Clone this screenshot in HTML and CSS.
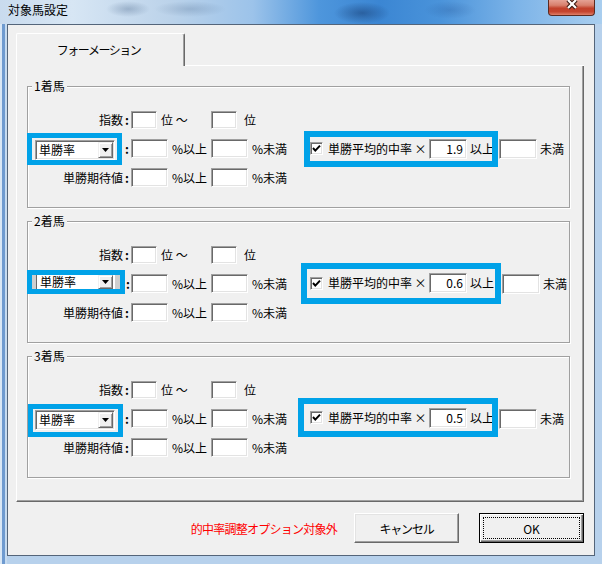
FILE: index.html
```html
<!DOCTYPE html>
<html lang="ja">
<head>
    <meta charset="UTF-8">
    <title>対象馬設定</title>
    <link rel="stylesheet" href="styles.css">
</head>
<body>
    <div class="window">
        <div class="titlebar">
            <span class="title">対象馬設定</span>
            <span class="close">
                <svg width="14" height="11" viewBox="0 0 14 11">
                    <path d="M3 1 L11 9 M11 1 L3 9" stroke="#3b1810" stroke-width="4.4" fill="none"/>
                    <path d="M3 1 L11 9 M11 1 L3 9" stroke="#fff" stroke-width="2.2" fill="none"/>
                </svg>
            </span>
        </div>

        <div class="client">
            <div class="tab-strip">
                <div class="tab">フォーメーション</div>
                <div class="tab-rest"></div>
            </div>

            <div class="tab-panel">
                <!-- 1着馬 -->
                <div class="group">
                    <div class="group-title">1着馬</div>
                    <div class="row">
                        <div class="lead"><span>指数</span><span class="colon">:</span></div>
                        <span class="edit edit-s"></span>
                        <span class="unit unit-range">位 ～</span>
                        <span class="edit edit-s"></span>
                        <span class="unit unit-rank">位</span>
                    </div>
                    <div class="row">
                        <div class="lead">
                            <div class="mark pick-1">
                                <div class="combo"><span>単勝率</span><span class="combo-btn"><svg width="7" height="4" viewBox="0 0 7 4"><path d="M0 0 H7 L3.5 4 Z" fill="#000"/></svg></span></div>
                            </div>
                            <span class="colon">:</span>
                        </div>
                        <span class="edit"></span>
                        <span class="unit unit-mid">%以上</span>
                        <span class="edit"></span>
                        <span class="unit unit-end">%未満</span>
                        <div class="mark tick-1">
                            <span class="checkbox"><svg width="11" height="11" viewBox="0 0 11 11"><path d="M2 5 L4.3 7.6 L9 2.6" stroke="#000" stroke-width="2" fill="none"/></svg></span>
                            <span class="check-label">単勝平均的中率</span>
                            <span class="times">×</span>
                            <span class="edit edit-num">1.9</span>
                            <span class="above">以上</span>
                        </div>
                        <span class="edit edit-num"></span>
                        <span class="unit unit-below">未満</span>
                    </div>
                    <div class="row">
                        <div class="lead"><span>単勝期待値</span><span class="colon">:</span></div>
                        <span class="edit"></span>
                        <span class="unit unit-mid">%以上</span>
                        <span class="edit"></span>
                        <span class="unit unit-end">%未満</span>
                    </div>
                </div>

                <!-- 2着馬 -->
                <div class="group">
                    <div class="group-title">2着馬</div>
                    <div class="row">
                        <div class="lead"><span>指数</span><span class="colon">:</span></div>
                        <span class="edit edit-s"></span>
                        <span class="unit unit-range">位 ～</span>
                        <span class="edit edit-s"></span>
                        <span class="unit unit-rank">位</span>
                    </div>
                    <div class="row">
                        <div class="lead">
                            <div class="mark pick-2">
                                <div class="combo combo-flat"><span>単勝率</span><span class="combo-btn"><svg width="7" height="4" viewBox="0 0 7 4"><path d="M0 0 H7 L3.5 4 Z" fill="#000"/></svg></span></div>
                            </div>
                            <span class="colon">:</span>
                        </div>
                        <span class="edit"></span>
                        <span class="unit unit-mid">%以上</span>
                        <span class="edit"></span>
                        <span class="unit unit-end">%未満</span>
                        <div class="mark tick-2">
                            <span class="checkbox"><svg width="11" height="11" viewBox="0 0 11 11"><path d="M2 5 L4.3 7.6 L9 2.6" stroke="#000" stroke-width="2" fill="none"/></svg></span>
                            <span class="check-label">単勝平均的中率</span>
                            <span class="times">×</span>
                            <span class="edit edit-num">0.6</span>
                            <span class="above">以上</span>
                        </div>
                        <span class="edit edit-num"></span>
                        <span class="unit unit-below">未満</span>
                    </div>
                    <div class="row">
                        <div class="lead"><span>単勝期待値</span><span class="colon">:</span></div>
                        <span class="edit"></span>
                        <span class="unit unit-mid">%以上</span>
                        <span class="edit"></span>
                        <span class="unit unit-end">%未満</span>
                    </div>
                </div>

                <!-- 3着馬 -->
                <div class="group">
                    <div class="group-title">3着馬</div>
                    <div class="row">
                        <div class="lead"><span>指数</span><span class="colon">:</span></div>
                        <span class="edit edit-s"></span>
                        <span class="unit unit-range">位 ～</span>
                        <span class="edit edit-s"></span>
                        <span class="unit unit-rank">位</span>
                    </div>
                    <div class="row">
                        <div class="lead">
                            <div class="mark pick-3">
                                <div class="combo"><span>単勝率</span><span class="combo-btn"><svg width="7" height="4" viewBox="0 0 7 4"><path d="M0 0 H7 L3.5 4 Z" fill="#000"/></svg></span></div>
                            </div>
                            <span class="colon">:</span>
                        </div>
                        <span class="edit"></span>
                        <span class="unit unit-mid">%以上</span>
                        <span class="edit"></span>
                        <span class="unit unit-end">%未満</span>
                        <div class="mark tick-3">
                            <span class="checkbox"><svg width="11" height="11" viewBox="0 0 11 11"><path d="M2 5 L4.3 7.6 L9 2.6" stroke="#000" stroke-width="2" fill="none"/></svg></span>
                            <span class="check-label">単勝平均的中率</span>
                            <span class="times">×</span>
                            <span class="edit edit-num">0.5</span>
                            <span class="above">以上</span>
                        </div>
                        <span class="edit edit-num"></span>
                        <span class="unit unit-below">未満</span>
                    </div>
                    <div class="row">
                        <div class="lead"><span>単勝期待値</span><span class="colon">:</span></div>
                        <span class="edit"></span>
                        <span class="unit unit-mid">%以上</span>
                        <span class="edit"></span>
                        <span class="unit unit-end">%未満</span>
                    </div>
                </div>
            </div>

            <div class="actions">
                <span class="notice">的中率調整オプション対象外</span>
                <span class="btn">キャンセル</span>
                <span class="btn btn-default">OK</span>
            </div>
        </div>
    </div>
</body>
</html>
```

FILE: styles.css
```css
* {
    box-sizing: border-box;
}

html, body {
    margin: 0;
}

body {
    width: 602px;
    height: 564px;
    overflow: hidden;
    font-family: "Noto Sans CJK JP", "Liberation Sans", sans-serif;
    font-size: 12px;
    color: #000;
    background: #b7d1ec;
}

.window {
    width: 602px;
    height: 564px;
    display: flex;
    flex-direction: column;
    /* marco Aero: franja izquierda */
    background:
        linear-gradient(90deg, #d9e7f5 0, #d9e7f5 2px, #6f9bd0 2px, #6f9bd0 5px, #c6dbf0 5px, #c6dbf0 7px, transparent 7px),
        #b7d1ec;
}

.titlebar {
    height: 24px;
    flex-shrink: 0;
    display: flex;
    align-items: flex-start;
    background:
        radial-gradient(ellipse 22px 8px at 128px 9px, rgba(40, 70, 110, 0.28), transparent),
        radial-gradient(ellipse 36px 8px at 190px 9px, rgba(40, 70, 110, 0.2), transparent),
        radial-gradient(ellipse 28px 11px at 362px 13px, rgba(15, 45, 95, 0.45), transparent),
        radial-gradient(ellipse 26px 9px at 450px 10px, rgba(25, 65, 130, 0.22), transparent),
        linear-gradient(90deg, #c9dbee 0%, #d7e6f4 12%, #bcd3ea 28%, #9cc3ea 42%, #4e96dc 53%, #3b86d3 63%, #4a93da 73%, #7db4e8 86%, #a9ceef 100%);
}

.title {
    padding: 1px 0 0 8px;
    line-height: 18px;
    font-size: 12px;
}

.close {
    margin-left: auto;
    margin-right: 7px;
    width: 47px;
    height: 16px;
    border: 1px solid #5c2a20;
    border-top: none;
    border-radius: 0 0 4px 4px;
    background: linear-gradient(#e5a294 0%, #d8806d 35%, #c2412b 55%, #c5452f 78%, #df8069 100%);
    display: flex;
    justify-content: center;
    align-items: flex-start;
}

.close svg {
    margin-top: -1px;
}

.client {
    margin: 0 7px;
    height: 532px;
    flex-shrink: 0;
    border: 1px solid #54657a;
    background: #f0f0f0;
    padding: 8px 10px 0 8px;
}

/* pestañas */
.tab-strip {
    display: flex;
    height: 33px;
}

.tab {
    width: 169px;
    height: 33px;
    border-top: 1px solid #fff;
    border-left: 1px solid #fff;
    border-right: 1px solid #696969;
    box-shadow: inset -1px 0 0 #a0a0a0;
    border-radius: 2px 2px 0 0;
    display: flex;
    align-items: center;
    justify-content: center;
    padding: 0 4px 2px 0;
    letter-spacing: -1.5px;
}

.tab-rest {
    flex: 1;
    border-bottom: 1px solid #fff;
}

.tab-panel {
    height: 436px;
    border-left: 1px solid #fff;
    border-right: 1px solid #696969;
    border-bottom: 1px solid #696969;
    box-shadow: inset -1px -1px 0 #a0a0a0;
    padding: 20px 13px 0 10px;
}

/* grupos */
.group {
    height: 122px;
    border: 1px solid #a0a0a0;
    box-shadow: 1px 1px 0 #fff, inset 1px 1px 0 #fff;
    margin-bottom: 13px;
}

.group-title {
    width: fit-content;
    margin: -8px 0 12px 4px;
    padding: 0 2px;
    line-height: 14px;
    background: #f0f0f0;
}

.row {
    display: flex;
    align-items: center;
    height: 29px;
    white-space: nowrap;
    line-height: 14px;
}

.row > * {
    flex-shrink: 0;
}

.lead {
    width: 104px;
    margin-left: -1px;
    display: flex;
    align-items: center;
    justify-content: flex-end;
}

.colon {
    width: 8px;
    text-align: center;
    font-weight: bold;
}

.unit-range {
    width: 54px;
    padding-left: 4px;
}

.unit-rank {
    margin-left: 7px;
}

.unit-mid {
    width: 43px;
    padding-left: 4px;
}

.unit-end {
    width: 50px;
    padding-left: 4px;
}

.unit-below {
    margin-left: 3px;
}

/* controles */
.edit {
    display: block;
    width: 37px;
    height: 19px;
    background: #fff;
    border: 1px solid;
    border-color: #a0a0a0 #fff #fff #a0a0a0;
    box-shadow: inset 1px 1px 0 #696969, inset -1px -1px 0 #e3e3e3;
}

.edit-s {
    width: 26px;
    height: 18px;
}

.edit-num {
    width: 38px;
    height: 20px;
    margin-left: 1px;
    text-align: right;
    padding-right: 3px;
    line-height: 17px;
}

.mark .edit-num {
    margin-left: 0;
}

.combo {
    width: 80px;
    height: 20px;
    background: #fff;
    border: 1px solid;
    border-color: #a0a0a0 #fff #fff #a0a0a0;
    box-shadow: inset 1px 1px 0 #696969, inset -1px -1px 0 #e3e3e3;
    display: flex;
    align-items: center;
    padding: 1px 1px 1px 3px;
}

.combo-btn {
    margin-left: auto;
    width: 15px;
    height: 16px;
    background: #f0f0f0;
    border: 1px solid;
    border-color: #f0f0f0 #696969 #696969 #f0f0f0;
    box-shadow: inset 1px 1px 0 #fff, inset -1px -1px 0 #a0a0a0;
    display: flex;
    align-items: center;
    justify-content: center;
}

.combo-flat {
    width: 79px;
    height: 14px;
    border-top: 0;
    border-bottom: 0;
    border-left-color: #696969;
    box-shadow: none;
    padding: 0 1px 0 3px;
}

.combo-flat .combo-btn {
    height: 14px;
}

.checkbox {
    width: 13px;
    height: 13px;
    background: #fff;
    border: 1px solid;
    border-color: #a0a0a0 #fff #fff #a0a0a0;
    box-shadow: inset 1px 1px 0 #696969, inset -1px -1px 0 #e3e3e3;
    display: flex;
    align-items: center;
    justify-content: center;
}

.check-label {
    margin-left: 5px;
    width: 84px;
}

.times {
    width: 17px;
    text-align: center;
}

.above {
    width: 22px;
    margin-left: 3px;
}

/* recuadros azules de la captura */
.mark {
    display: flex;
    align-items: center;
    border: 5px solid #00a2e8;
}

.mark > * {
    flex-shrink: 0;
}

.pick-1 {
    width: 95px;
    height: 32px;
    align-items: flex-start;
    padding: 2px 2px 0 3px;
    margin-right: auto;
}

.pick-2 {
    width: 98px;
    height: 24px;
    padding: 0 5px 0 4px;
    background: #cfcfcf;
    margin-right: auto;
    margin-bottom: 3px;
}

.pick-3 {
    width: 95px;
    height: 33px;
    align-items: flex-start;
    padding: 1px 3px 0 2px;
    margin: 4px auto 0 1px;
}

.tick-1,
.tick-2,
.tick-3 {
    border-width: 6px;
    overflow: hidden;
}

.tick-1 {
    width: 194px;
    height: 36px;
    margin-left: 6px;
}

.tick-2 {
    width: 200px;
    height: 41px;
    margin-left: 3px;
    margin-bottom: 1px;
    padding-left: 3px;
}

.tick-3 {
    width: 200px;
    height: 39px;
    padding-left: 6px;
    margin-bottom: 2px;
}

/* botones */
.actions {
    display: flex;
    justify-content: flex-end;
    align-items: center;
    height: 30px;
    margin-top: 11px;
}

.notice {
    color: #f00;
    letter-spacing: -0.75px;
    margin-right: 17px;
}

.btn {
    width: 105px;
    height: 30px;
    display: flex;
    align-items: center;
    justify-content: center;
    background: #f0f0f0;
    border: 1px solid;
    border-color: #fff #696969 #696969 #fff;
    box-shadow: inset -1px -1px 0 #a0a0a0, inset 1px 1px 0 #e3e3e3;
    letter-spacing: -1.2px;
}

.btn + .btn {
    margin-left: 20px;
}

.btn-default {
    border-color: #000;
    box-shadow: inset 1px 1px 0 #fff, inset -1px -1px 0 #696969, inset -2px -2px 0 #a0a0a0;
    outline: 1px dotted #000;
    outline-offset: -5px;
    letter-spacing: 0;
}
```
